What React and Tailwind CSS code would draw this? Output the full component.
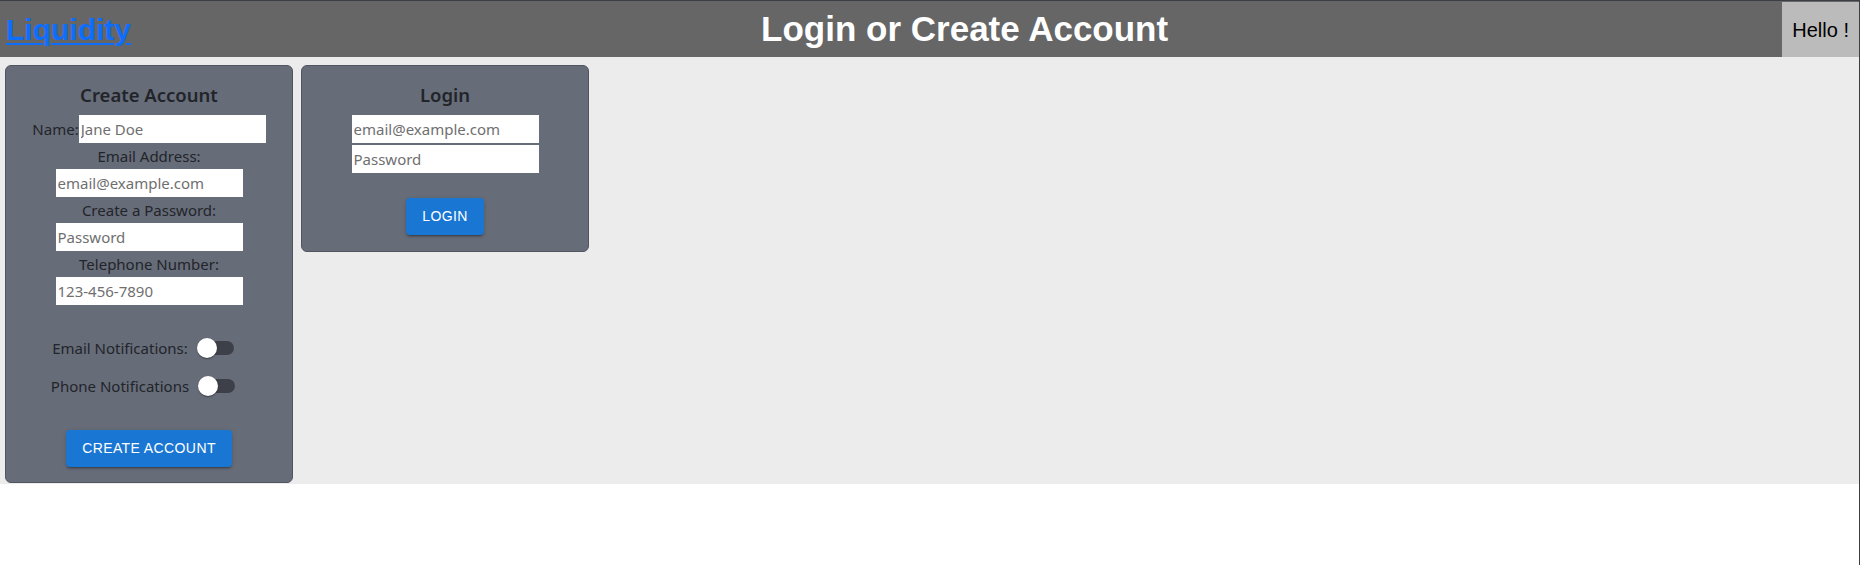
import React from 'react';

const Toggle = () => (
  <span className="relative inline-block w-[58px] h-[38px] shrink-0">
    <span className="absolute left-[12px] top-[12px] w-[34px] h-[14px] rounded-full bg-black/40" />
    <span className="absolute left-[9px] top-[9px] w-[20px] h-[20px] rounded-full bg-white shadow-[0_2px_1px_-1px_rgba(0,0,0,0.2),0_1px_1px_0_rgba(0,0,0,0.14),0_1px_3px_0_rgba(0,0,0,0.12)]" />
  </span>
);

const Field = ({ placeholder }) => (
  <input
    className="w-[187px] h-[28px] bg-white px-[2px] text-[15px] text-[#212529] placeholder:text-[#6f6f6f] outline-none"
    placeholder={placeholder}
  />
);

const Button = ({ children }) => (
  <button className="h-[37px] px-[16px] rounded-[4px] bg-[#1976d2] text-white text-[14px] tracking-[0.4px] uppercase font-['Liberation_Sans',Arial,sans-serif] shadow-[0_3px_1px_-2px_rgba(0,0,0,0.2),0_2px_2px_0_rgba(0,0,0,0.14),0_1px_5px_0_rgba(0,0,0,0.12)]">
    {children}
  </button>
);

const Card = ({ title, children, className = '' }) => (
  <div className={`w-[288px] flex flex-col items-center rounded-[6px] border border-[#50555f] bg-[#676c79] pt-[17px] text-[#212529] ${className}`}>
    <h2 className="h-[24px] leading-[24px] text-[18.5px] font-semibold">{title}</h2>
    {children}
  </div>
);

export default function App() {
  return (
    <div className="min-h-screen border-t border-r border-[#3b3f45] bg-white font-['Noto_Sans',sans-serif]">
      {/* Header */}
      <header className="h-[56px] flex items-center justify-between bg-[#666666] font-['Liberation_Sans',Arial,sans-serif]">
        <a href="#" className="ml-[6px] text-[30px] font-bold text-[#0d6efd] underline decoration-[2px] underline-offset-[3px]">
          Liquidity
        </a>
        <h1 className="pl-[16px] text-[35px] font-bold text-white">Login or Create Account</h1>
        <div className="self-stretch mt-[1px] flex items-center bg-[#bbbbbb] pl-[10px] pr-[10px] text-[20px] text-black">
          Hello !
        </div>
      </header>

      {/* Body */}
      <main className="flex items-start gap-[8px] bg-[#ececec] pl-[5px] pt-[8px] pb-[1px]">
        <Card title="Create Account" className="pb-[15px]">
          <div className="mt-[8px] flex items-center text-[15px]">
            <span>Name:</span>
            <Field placeholder="Jane Doe" />
          </div>
          <div className="h-[26px] leading-[26px] text-[15px]">Email Address:</div>
          <Field placeholder="email@example.com" />
          <div className="h-[26px] leading-[26px] text-[15px]">Create a Password:</div>
          <Field placeholder="Password" />
          <div className="h-[26px] leading-[26px] text-[15px]">Telephone Number:</div>
          <Field placeholder="123-456-7890" />

          <div className="mt-[24px] flex flex-col items-center text-[15px]">
            <label className="flex items-center">
              <span>Email Notifications:</span>
              <Toggle />
            </label>
            <label className="flex items-center">
              <span>Phone Notifications</span>
              <Toggle />
            </label>
          </div>

          <div className="mt-[25px]">
            <Button>Create Account</Button>
          </div>
        </Card>

        <Card title="Login" className="pb-[16px]">
          <div className="mt-[8px] flex flex-col gap-[2px]">
            <Field placeholder="email@example.com" />
            <Field placeholder="Password" />
          </div>
          <div className="mt-[25px]">
            <Button>Login</Button>
          </div>
        </Card>
      </main>
    </div>
  );
}
